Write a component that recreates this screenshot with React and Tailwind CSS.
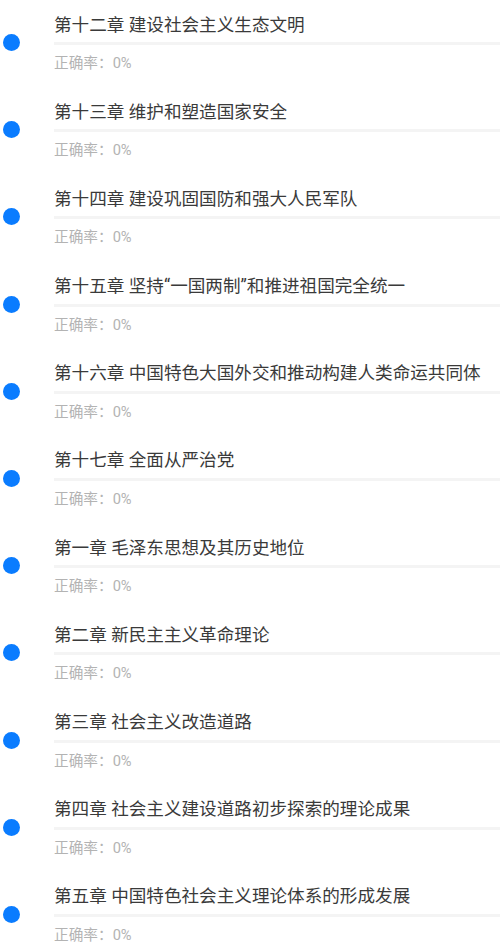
import React from "react";

const chapters = [
  "第十二章 建设社会主义生态文明",
  "第十三章 维护和塑造国家安全",
  "第十四章 建设巩固国防和强大人民军队",
  "第十五章 坚持“一国两制”和推进祖国完全统一",
  "第十六章 中国特色大国外交和推动构建人类命运共同体",
  "第十七章 全面从严治党",
  "第一章 毛泽东思想及其历史地位",
  "第二章 新民主主义革命理论",
  "第三章 社会主义改造道路",
  "第四章 社会主义建设道路初步探索的理论成果",
  "第五章 中国特色社会主义理论体系的形成发展",
];

export default function App() {
  return (
    <div
      className="w-[500px] bg-white"
      style={{ fontFamily: 'Roboto, "Noto Sans CJK SC", sans-serif' }}
    >
      {chapters.map((t) => (
        <div key={t} className="flex h-[87.2px]">
          <div className="w-[54px] shrink-0 pt-[34px] pl-[3px]">
            <div className="h-[17px] w-[17px] rounded-full bg-[#0a7cff]" />
          </div>
          <div className="flex-1 pt-[12.5px]">
            <div className="text-[17.6px] leading-[24px] text-[#3a3a3a] whitespace-nowrap">
              {t}
            </div>
            <div className="mt-[5.5px] h-[3px] bg-[#f4f4f4]" />
            <div className="mt-[8px] text-[14.67px] leading-[20px] text-[#b3b3b3]">
              正确率：0%
            </div>
          </div>
        </div>
      ))}
    </div>
  );
}
